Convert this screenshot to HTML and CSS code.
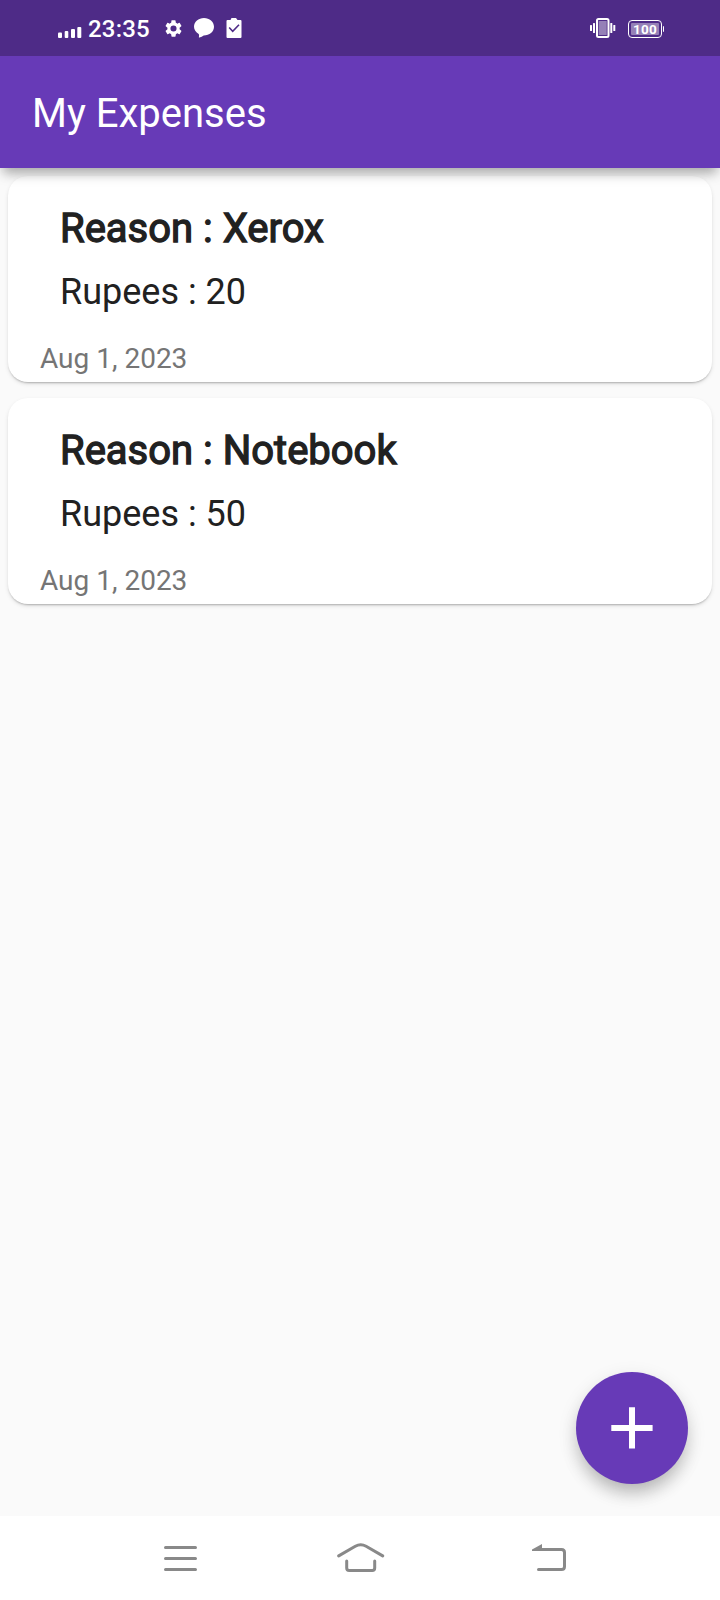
FILE: index.html
```html
<!DOCTYPE html>
<html lang="en">
<head>
<meta charset="utf-8">
<title>My Expenses</title>
<link rel="stylesheet" href="styles.css">
</head>
<body>
<div class="screen">
  <header class="top">
    <div class="status">
      <svg class="signal" width="24" height="12" viewBox="0 0 24 12" fill="#fff">
        <rect x="0" y="6.500" width="4" height="5.500" rx="1"/><rect x="6.700" y="5" width="3.600" height="7" rx="1"/><rect x="13" y="3" width="4" height="9" rx="1"/><rect x="19.300" y="1" width="4" height="11" rx="1"/>
      </svg>
      <span class="clock">23:35</span>
      <svg class="gear" width="17" height="17" viewBox="2 2 20 20" fill="#fff">
        <path d="M19.14 12.94c.04-.3.06-.61.06-.94s-.02-.64-.07-.94l2.03-1.58a.49.49 0 0 0 .12-.61l-1.92-3.32a.49.49 0 0 0-.59-.22l-2.39.96a7 7 0 0 0-1.62-.94l-.36-2.54A.48.48 0 0 0 13.92 2.4h-3.84c-.24 0-.43.17-.47.41l-.36 2.54c-.59.24-1.13.57-1.62.94l-2.39-.96a.49.49 0 0 0-.59.22L2.74 8.87a.48.48 0 0 0 .12.61l2.03 1.58a6 6 0 0 0 0 1.88l-2.03 1.58a.49.49 0 0 0-.12.61l1.92 3.32c.12.22.37.29.59.22l2.39-.96c.5.38 1.03.7 1.62.94l.36 2.54c.05.24.24.41.48.41h3.84c.24 0 .44-.17.47-.41l.36-2.54a7 7 0 0 0 1.62-.94l2.39.96c.22.08.47 0 .59-.22l1.92-3.32a.48.48 0 0 0-.12-.61zM12 15.6a3.6 3.6 0 1 1 0-7.2 3.6 3.6 0 0 1 0 7.2z"/>
      </svg>
      <svg class="chat" width="20" height="20" viewBox="0 0 20 20" fill="#fff">
        <path d="M10 0C4.500 0 0 3.800 0 8.700c0 2.800 1.800 5.600 4.700 7.300.5.800.4 1.900.2 2.900-.1.600.1.600.6.500 1.500-.4 3-1.200 4.200-2C15.500 17.400 20 13.600 20 8.700 20 3.800 15.500 0 10 0z"/>
      </svg>
      <svg class="task" width="16" height="20" viewBox="0 0 16 20">
        <path fill="#fff" d="M1.500 2H4.500L5.500 0H10L11.500 2H14.500Q15.500 2 15.500 3V19Q15.500 20 14.500 20H1.500Q.500 20 .500 19V3Q.500 2 1.500 2z"/>
        <path fill="none" stroke="#4e2b87" stroke-width="1.600" d="M3.200 9.500l3.500 3.800 6.300-6.600"/>
      </svg>
      <svg class="vibrate" width="26" height="20" viewBox="0 0 26 20">
        <g fill="#fff"><rect x="0" y="7" width="2" height="6" rx=".5"/><rect x="3" y="5" width="2" height="10" rx=".5"/><rect x="20.300" y="5" width="2" height="10" rx=".5"/><rect x="23.300" y="7" width="2" height="6" rx=".5"/></g>
        <rect x="7" y="1" width="11.500" height="18" rx="1.500" fill="none" stroke="#fff" stroke-width="2"/>
        <rect x="8.700" y="3" width="8" height="14" fill="#9580b7"/>
      </svg>
      <div class="battery"><div class="level">100</div></div>
    </div>
    <div class="appbar"><h1 class="title">My Expenses</h1></div>
  </header>
  <main class="list">
    <article class="card">
      <h2 class="reason">Reason : Xerox</h2>
      <p class="amount">Rupees : 20</p>
      <p class="date">Aug 1, 2023</p>
    </article>
    <article class="card">
      <h2 class="reason">Reason : Notebook</h2>
      <p class="amount">Rupees : 50</p>
      <p class="date">Aug 1, 2023</p>
    </article>
  </main>
  <button class="fab" aria-label="Add expense">
    <svg width="42" height="42" viewBox="0 0 42 42" fill="#fff"><path d="M18 .300h6v17.700h17.600v6H24v17.600h-6V24H.300v-6h17.700z"/></svg>
  </button>
  <nav class="nav">
    <svg width="34" height="26" viewBox="0 0 34 26" stroke="#898989" stroke-width="3" stroke-linecap="round"><path d="M1.500 1.500h30M1.500 12.500h30M1.500 23.500h30"/></svg>
    <svg class="home" width="48" height="30" viewBox="0 0 48 30" fill="none" stroke="#898989" stroke-width="3" stroke-linecap="round" stroke-linejoin="round"><path d="M1.700 12.900L18.300 3.300Q23.700 .200 29.100 3.300L45.700 12.900M9.700 18v7q0 2.500 2.500 2.500h23q2.500 0 2.500-2.500v-7"/></svg>
    <svg class="back" width="36" height="28" viewBox="0 0 36 28"><path fill="#898989" d="M0 7V5.500L10 0V7z"/><path fill="none" stroke="#898989" stroke-width="3" stroke-linecap="round" d="M8 5.500h21.500q3 0 3 3v14q0 3-3 3H6.500"/></svg>
  </nav>
</div>
</body>
</html>
```
FILE: styles.css
```css
* { box-sizing: border-box; margin: 0; padding: 0; }
body { font-family: Roboto, "Liberation Sans", sans-serif; background: #fafafa; }
svg { display: block; flex: none; }
.screen { width: 720px; height: 1600px; display: flex; flex-direction: column; position: relative; overflow: hidden; }
.top {
  position: relative;
  z-index: 1;
  color: #fff;
  background: #673ab7;
  box-shadow: 0 9px 10px -4px rgba(0,0,0,.22), 0 6px 14px -1px rgba(0,0,0,.14);
}
.status { height: 56px; background: #4e2b87; display: flex; align-items: center; padding: 0 56px 0 58px; }
.signal { margin-top: 8px; }
.clock { font-size: 24px; font-weight: 500; line-height: 28px; letter-spacing: .2px; margin-left: 6px; padding-top: 2px; width: 62px; white-space: nowrap; }
.gear { margin-left: 15px; }
.chat { margin-left: 12px; }
.task { margin-left: 12px; }
.vibrate { margin-left: auto; }
.battery { width: 34px; height: 18px; margin: 2px 2px 0 12px; border: 1.5px solid #fff; border-radius: 4px; padding: 2px; position: relative; }
.battery::after { content: ""; position: absolute; right: -3px; top: 5px; width: 1.5px; height: 6px; background: #fff; border-radius: 0 1px 1px 0; }
.level { height: 100%; border-radius: 1px; background: #9580b7; font-size: 13.5px; font-weight: 700; line-height: 13px; text-align: center; letter-spacing: .3px; }
.appbar { height: 112px; display: flex; align-items: center; padding: 4px 32px 0; }
.title { font-size: 40px; font-weight: 400; line-height: 48px; }
.list { flex: 1; display: flex; flex-direction: column; gap: 16px; padding: 8px; }
.card {
  height: 206px;
  border-radius: 20px;
  background: #fff;
  padding: 29px 32px 0;
  box-shadow: 0 2px 2px -1px rgba(0,0,0,.24), 0 2px 4px rgba(0,0,0,.1);
}
.reason { font-size: 40px; font-weight: 400; line-height: 48px; padding-left: 20px; color: #212121; -webkit-text-stroke: 1.3px #212121; }
.amount { font-size: 36px; line-height: 42px; margin-top: 18px; padding-left: 20px; color: #212121; }
.date { font-size: 28px; line-height: 32px; margin-top: 30px; color: #757575; }
.fab {
  position: absolute;
  right: 32px;
  bottom: 116px;
  width: 112px;
  height: 112px;
  border: 0;
  border-radius: 50%;
  background: #673ab7;
  display: flex;
  align-items: center;
  justify-content: center;
  box-shadow: 0 12px 18px -4px rgba(0,0,0,.22), 0 6px 20px rgba(0,0,0,.11);
}
.nav { height: 84px; background: #fff; display: flex; align-items: center; padding: 2px 0 0 164px; position: relative; }
.home { margin: 0 147px 2px 139px; }
.back { margin-bottom: 2px; }
```
